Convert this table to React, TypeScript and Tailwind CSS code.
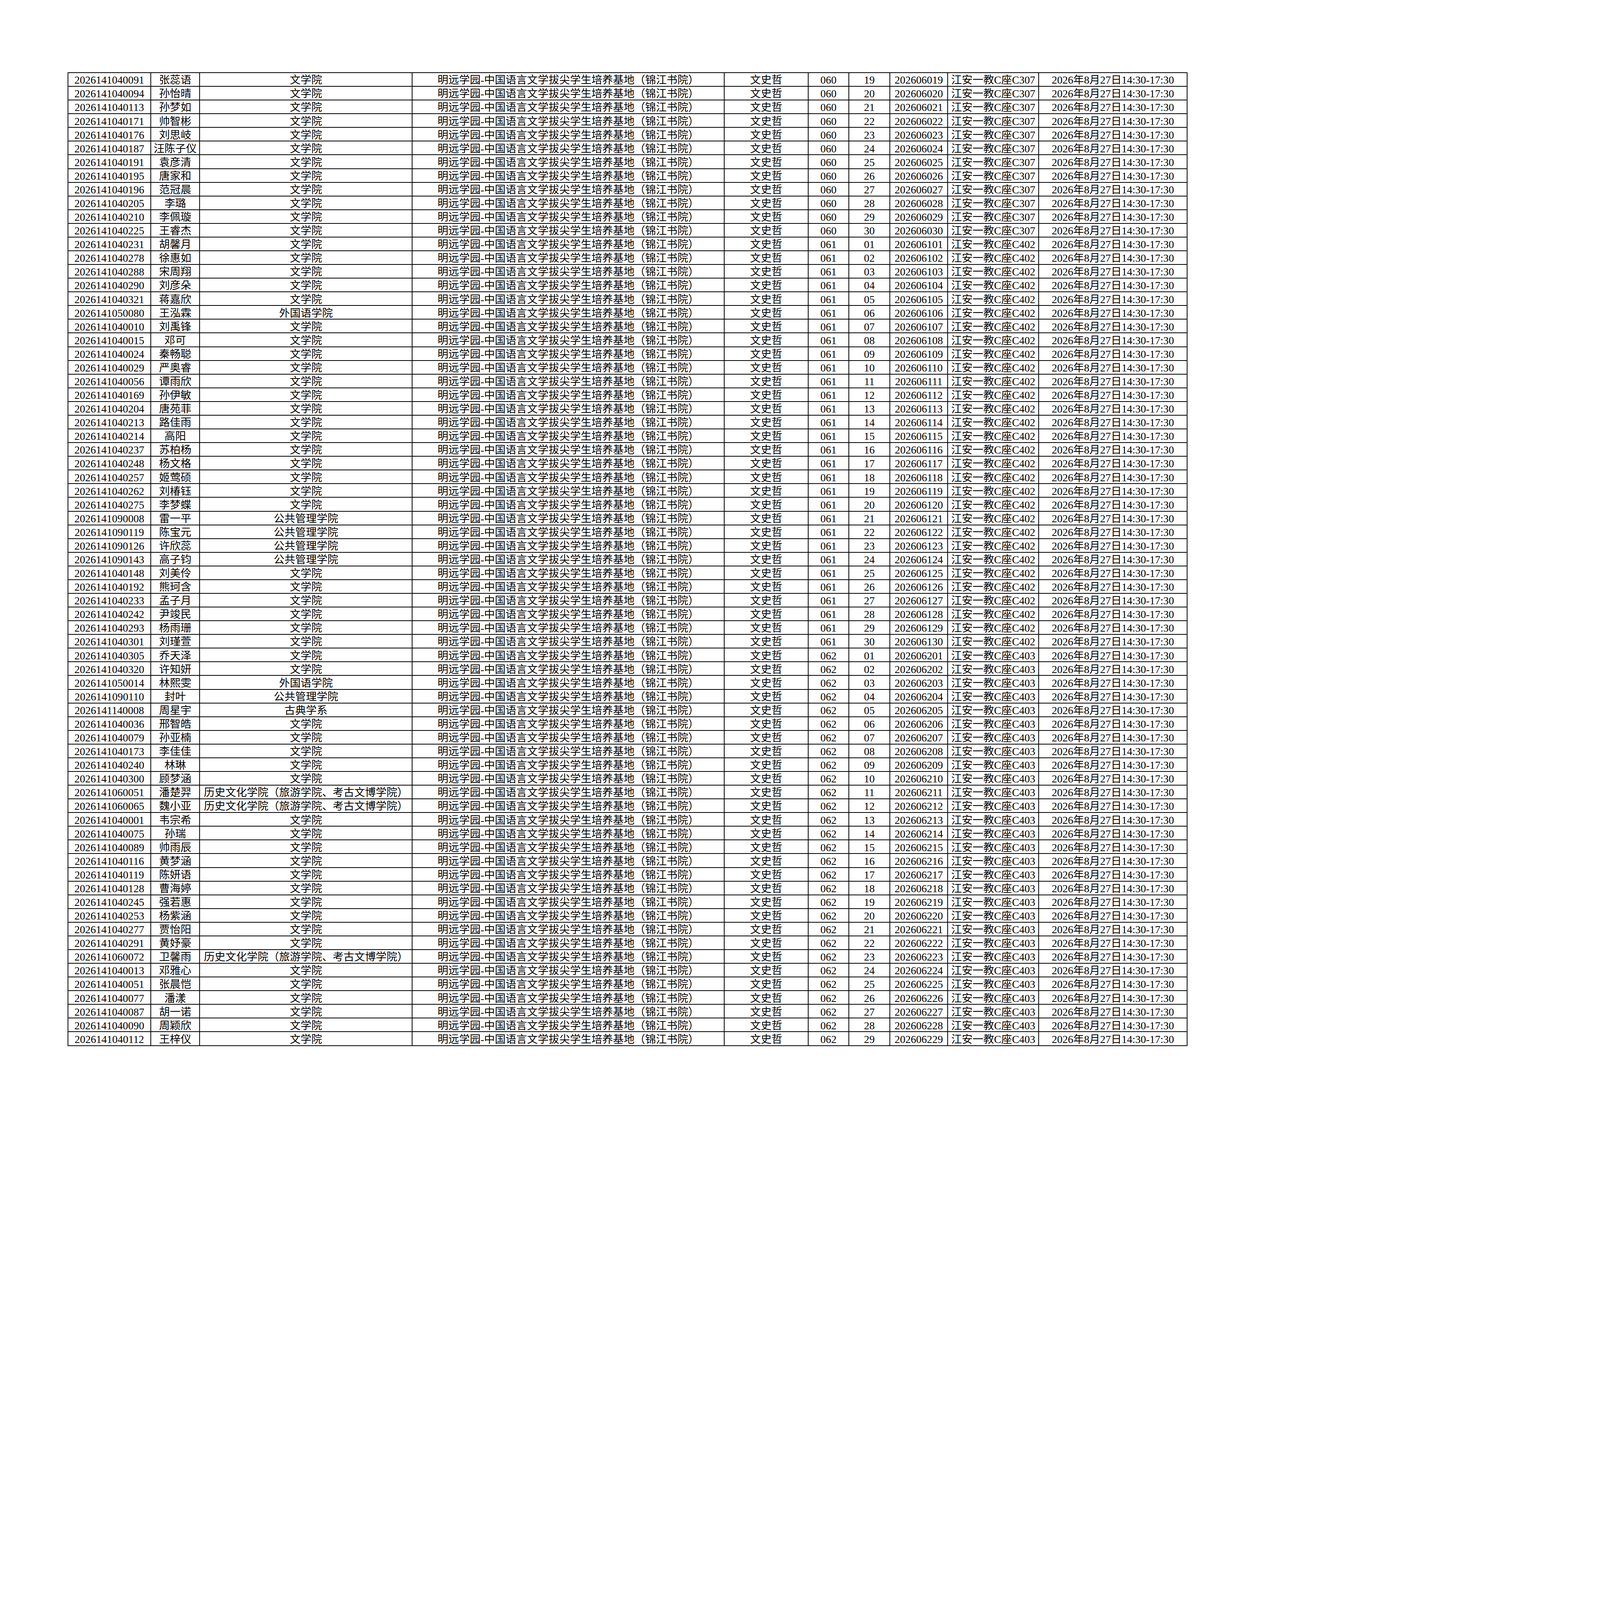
const W = "文学院";
const F = "外国语学院";
const G = "公共管理学院";
const K = "古典学系";
const H = "历史文化学院（旅游学院、考古文博学院）";
const PROGRAM = "明远学园-中国语言文学拔尖学生培养基地（锦江书院）";
const TIME = "2026年8月27日14:30-17:30";

const rooms: { code: string; place: string; start: number; people: [string, string, string][] }[] = [
  {
    code: "060",
    place: "江安一教C座C307",
    start: 19,
    people: [
      ["2026141040091", "张蕊语", W],
      ["2026141040094", "孙怡晴", W],
      ["2026141040113", "孙梦如", W],
      ["2026141040171", "帅智彬", W],
      ["2026141040176", "刘思岐", W],
      ["2026141040187", "汪陈子仪", W],
      ["2026141040191", "袁彦清", W],
      ["2026141040195", "唐家和", W],
      ["2026141040196", "范冠晨", W],
      ["2026141040205", "李璐", W],
      ["2026141040210", "李佩璇", W],
      ["2026141040225", "王睿杰", W],
    ],
  },
  {
    code: "061",
    place: "江安一教C座C402",
    start: 1,
    people: [
      ["2026141040231", "胡馨月", W],
      ["2026141040278", "徐惠如", W],
      ["2026141040288", "宋周翔", W],
      ["2026141040290", "刘彦朵", W],
      ["2026141040321", "蒋嘉欣", W],
      ["2026141050080", "王泓霖", F],
      ["2026141040010", "刘禹锋", W],
      ["2026141040015", "邓可", W],
      ["2026141040024", "秦畅聪", W],
      ["2026141040029", "严奥睿", W],
      ["2026141040056", "谭雨欣", W],
      ["2026141040169", "孙伊敏", W],
      ["2026141040204", "唐苑菲", W],
      ["2026141040213", "路佳雨", W],
      ["2026141040214", "高阳", W],
      ["2026141040237", "苏柏杨", W],
      ["2026141040248", "杨文格", W],
      ["2026141040257", "姬莺硕", W],
      ["2026141040262", "刘椿钰", W],
      ["2026141040275", "李梦蝶", W],
      ["2026141090008", "雷一平", G],
      ["2026141090119", "陈宝元", G],
      ["2026141090126", "许欣蕊", G],
      ["2026141090143", "高子钧", G],
      ["2026141040148", "刘美伶", W],
      ["2026141040192", "熊珂含", W],
      ["2026141040233", "孟子月", W],
      ["2026141040242", "尹竣民", W],
      ["2026141040293", "杨雨珊", W],
      ["2026141040301", "刘瑾萱", W],
    ],
  },
  {
    code: "062",
    place: "江安一教C座C403",
    start: 1,
    people: [
      ["2026141040305", "乔天泽", W],
      ["2026141040320", "许知妍", W],
      ["2026141050014", "林熙雯", F],
      ["2026141090110", "封叶", G],
      ["2026141140008", "周星宇", K],
      ["2026141040036", "邢智皓", W],
      ["2026141040079", "孙亚楠", W],
      ["2026141040173", "李佳佳", W],
      ["2026141040240", "林琳", W],
      ["2026141040300", "顾梦涵", W],
      ["2026141060051", "潘楚羿", H],
      ["2026141060065", "魏小亚", H],
      ["2026141040001", "韦宗希", W],
      ["2026141040075", "孙瑞", W],
      ["2026141040089", "帅雨辰", W],
      ["2026141040116", "黄梦涵", W],
      ["2026141040119", "陈妍语", W],
      ["2026141040128", "曹海婷", W],
      ["2026141040245", "强若惠", W],
      ["2026141040253", "杨紫涵", W],
      ["2026141040277", "贾怡阳", W],
      ["2026141040291", "黄妤豪", W],
      ["2026141060072", "卫馨雨", H],
      ["2026141040013", "邓雅心", W],
      ["2026141040051", "张晨恺", W],
      ["2026141040077", "潘漾", W],
      ["2026141040087", "胡一诺", W],
      ["2026141040090", "周颖欣", W],
      ["2026141040112", "王梓仪", W],
    ],
  },
];

const rows = rooms.flatMap((room) =>
  room.people.map(([id, name, college], i) => {
    const seat = String(room.start + i).padStart(2, "0");
    return [id, name, college, PROGRAM, "文史哲", room.code, seat, "2026" + room.code + seat, room.place, TIME];
  })
);

function Cell({ children }: { children: string }) {
  return (
    <div className="h-[35.09px] flex items-center justify-center whitespace-nowrap overflow-visible border-r-2 border-b-2 border-black pt-[3px]">
      {children}
    </div>
  );
}

export default function App() {
  return (
    <div
      className="h-[2896px] overflow-hidden bg-white text-black pl-[173px] pt-[185px] text-[27.5px] leading-none"
      style={{ fontFamily: "'Liberation Serif', 'Noto Sans CJK SC', serif" }}
    >
      <div className="inline-grid grid-cols-[211.6px_125.8px_543.8px_799.2px_214.2px_104.5px_105.1px_147.7px_233.5px_379.3px] border-l-2 border-t-2 border-black">
        {rows.map((r, ri) => r.map((v, ci) => <Cell key={ri + "-" + ci}>{v}</Cell>))}
      </div>
    </div>
  );
}
